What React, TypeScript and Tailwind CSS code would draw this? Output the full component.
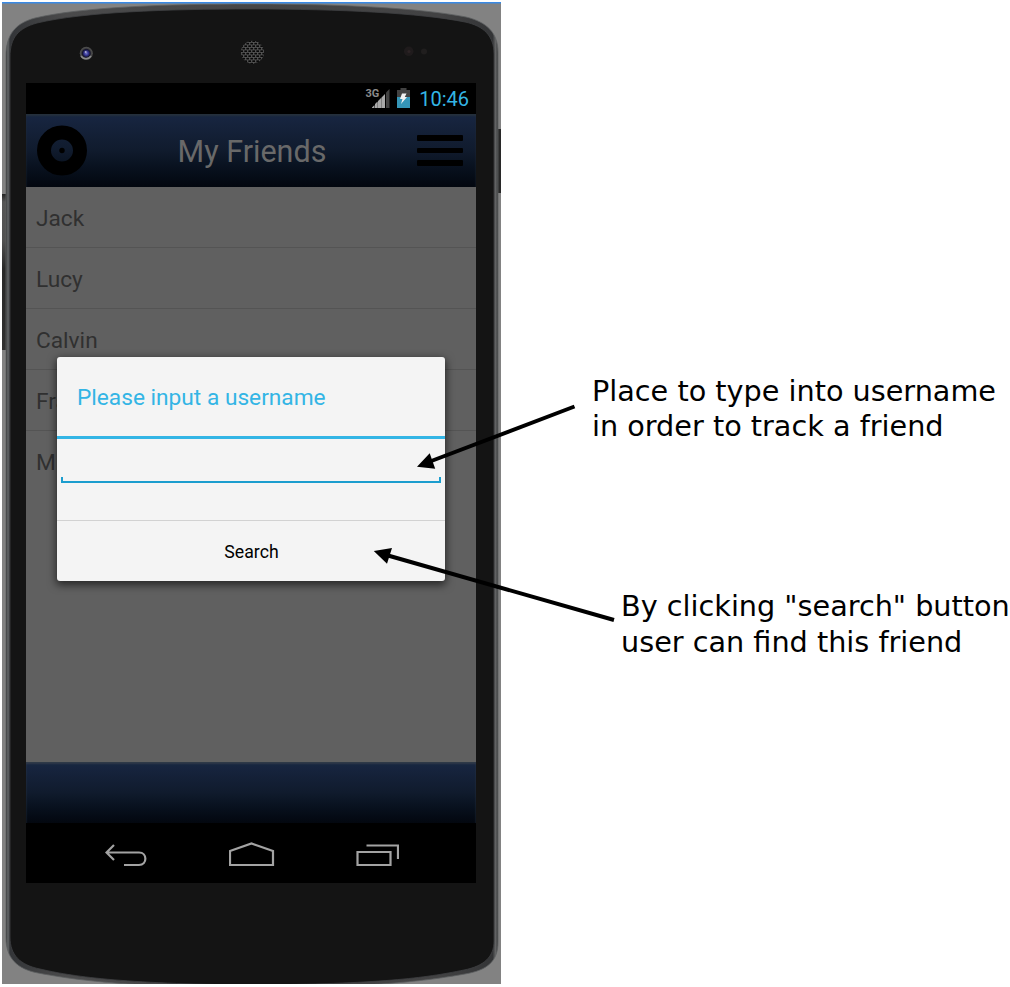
import React from "react";

const friends = ["Jack", "Lucy", "Calvin", "Frank", "Mike"];

const BODY =
  "M6 190V56C6 34 16 23 35 18C82 7 165 4 252 4C340 4 420 8 466 17C487 22 498 33 498 52V942C498 961 488 970 465 974C425 981 380 987 252 988C120 987 70 979 38 973C17 969 6 958 6 938Z";
const FACE =
  "M10 190V57C10 37 19 28 37 23C84 12 165 9 252 9C340 9 420 13 465 22C484 26 494 36 494 54V941C494 957 484 966 464 970C425 978 380 984 252 985C120 984 70 976 40 969C20 965 10 955 10 937Z";

function PhoneBody() {
  return (
    <svg className="absolute inset-0" width="501" height="984" viewBox="0 0 501 984">
      <defs>
        <linearGradient id="rim" x1="0" y1="0" x2="1" y2="0">
          <stop offset="0" stopColor="#303132" />
          <stop offset="0.004" stopColor="#66696b" />
          <stop offset="0.008" stopColor="#333538" />
          <stop offset="0.12" stopColor="#4a4a4b" />
          <stop offset="0.88" stopColor="#424243" />
          <stop offset="0.989" stopColor="#333436" />
          <stop offset="0.995" stopColor="#626364" />
          <stop offset="1" stopColor="#3a3b3c" />
        </linearGradient>
        <pattern id="mesh" width="4" height="5" patternUnits="userSpaceOnUse">
          <rect width="4" height="5" fill="#565656" />
          <rect x="0.3" y="0.3" width="2.8" height="1.7" fill="#080808" />
          <rect x="2.3" y="2.8" width="1.7" height="1.7" fill="#080808" />
          <rect x="0" y="2.8" width="1.1" height="1.7" fill="#080808" />
        </pattern>
        <radialGradient id="lens">
          <stop offset="0" stopColor="#7375c9" />
          <stop offset="0.35" stopColor="#30308c" />
          <stop offset="0.6" stopColor="#15152c" />
          <stop offset="0.78" stopColor="#444444" />
          <stop offset="1" stopColor="#525253" />
        </radialGradient>
        <linearGradient id="key" x1="0" y1="0" x2="0" y2="1">
          <stop offset="0" stopColor="#252525" />
          <stop offset="0.05" stopColor="#565656" />
          <stop offset="0.3" stopColor="#515151" />
          <stop offset="0.48" stopColor="#282828" />
          <stop offset="1" stopColor="#303030" />
        </linearGradient>
      </defs>
      <rect x="2" y="194" width="5" height="156" fill="url(#key)" />
      <rect x="498" y="129" width="3" height="64" fill="#282828" />
      <path d={BODY} fill="url(#rim)" />
      <path d={BODY} fill="none" stroke="#5d5f61" strokeWidth="0.8" />
      <path d={FACE} fill="#141414" stroke="#3f4042" strokeWidth="0.8" />
      <rect x="2" y="2" width="499" height="1.5" fill="#3989e4" />
      <circle cx="86.3" cy="53.3" r="6.5" fill="url(#lens)" />
      <path d="M81 56A6 6 0 0 0 91 56" fill="none" stroke="#8a8a8a" strokeWidth="1.4" />
      <circle cx="85.7" cy="52" r="1" fill="#aaaacf" />
      <circle cx="252.5" cy="52.2" r="11.5" fill="url(#mesh)" />
      <circle cx="408.7" cy="51.3" r="4.8" fill="#1f1b1c" />
      <circle cx="409" cy="51.5" r="1.6" fill="#2c2325" />
      <circle cx="424" cy="51.5" r="3" fill="#201e1e" />
    </svg>
  );
}

function StatusBar() {
  return (
    <div className="flex h-[31px] items-center justify-end bg-black pr-[7px]">
      <span className="mb-[11px] font-['Roboto'] text-[11px] leading-none font-bold text-[#8b8b8b]">3G</span>
      <svg className="mr-[7px] -ml-[8px]" width="19" height="20" viewBox="0 0 19 20">
        <path d="M15 3.500L18.500 0V19H15Z" fill="#424242" />
        <path d="M1 19V18.500L3 16.500V19ZM4 19V15L6.500 12.500V19ZM7 19V12L10 9V19ZM10.500 19V8.500L14 5V19Z" fill="#a8a8a8" />
        <path d="M1 19L14 5.500V19Z" fill="#a8a8a8" opacity=".5" />
      </svg>
      <svg className="mr-[9px] mb-[2px]" width="13" height="20" viewBox="0 0 13 20">
        <path d="M0 2H3.500V0H9.500V2H13V9H0Z" fill="#424242" />
        <path d="M0 9H13V20H0Z" fill="#3596b8" />
        <path d="M5 5.500H9.500L7.800 9H10L4 16L5.500 11H3Z" fill="#f2f2f2" />
      </svg>
      <span className="mt-[1px] font-['Roboto'] text-[20px] leading-none text-[#33b5e5]">10:46</span>
    </div>
  );
}

function TitleBar() {
  return (
    <header className="flex h-[73px] items-center justify-between bg-linear-to-b from-[#182642] via-[#101b2d] to-[#03070f] pr-[13px] pl-[11px] shadow-[inset_0_2px_2px_#25303c]">
      <svg width="50" height="51" viewBox="0 0 50 51">
        <circle cx="25" cy="25.500" r="18" fill="none" stroke="#000" strokeWidth="14" />
        <circle cx="25" cy="25.500" r="2.700" fill="#000" />
      </svg>
      <h1 className="mt-[3px] font-['Roboto'] text-[30.500px] leading-none text-[#696969]">My Friends</h1>
      <div className="flex w-[46px] flex-col gap-[7px]">
        <i className="h-[5.500px] rounded-[1px] bg-black" />
        <i className="h-[5.500px] rounded-[1px] bg-black" />
        <i className="h-[5.500px] rounded-[1px] bg-black" />
      </div>
    </header>
  );
}

function NavBar() {
  return (
    <nav className="flex h-[60px] items-center justify-between bg-black pt-[4px] pr-[77px] pl-[79px]">
      <svg width="42" height="24" viewBox="0 0 42 24" fill="none" stroke="#a3a3a3" strokeWidth="2.200">
        <path d="M9 2L1.500 9.500L9 17M2 9.500H34C42.500 9.500 42.500 22 34 22H19" />
      </svg>
      <svg className="-mt-[2px]" width="46" height="26" viewBox="0 0 46 26" fill="none" stroke="#a3a3a3" strokeWidth="2.200">
        <path d="M1 10L22.500 2.500L44 10V24H1Z" />
      </svg>
      <svg width="43" height="24" viewBox="0 0 43 24" fill="none" stroke="#a3a3a3" strokeWidth="2.200">
        <path d="M1.500 9H34.500V22H1.500ZM10.500 2.500H42V16" />
      </svg>
    </nav>
  );
}

function SearchDialog() {
  return (
    <section className="absolute top-[357px] left-[57px] flex h-[223.500px] w-[388px] flex-col rounded-[3px] bg-[#f4f4f4] font-['Roboto'] shadow-[0_3px_8px_1px_rgba(0,0,0,0.6)]">
      <h2 className="flex h-[82px] items-center border-b-[3px] border-[#33b5e5] pt-[3px] pl-[20px] text-[22.700px] leading-none text-[#33b5e5]">
        Please input a username
      </h2>
      <div className="flex h-[81px] flex-col px-[4px] pt-[38px]">
        <input aria-label="Username" className="h-[6px] border-x-2 border-b-2 border-[#1b9dce] bg-transparent outline-none" />
      </div>
      <button className="flex-1 border-t border-[#d2d2d2] pt-[4px] pl-[1px] text-[17.700px] leading-none text-black">Search</button>
    </section>
  );
}

function Arrows() {
  return (
    <svg className="absolute inset-0" width="1010" height="987" viewBox="0 0 1010 987">
      <path d="M574.500 406.500L430 461.500M614 620L388 555.500" stroke="#000" strokeWidth="4" />
      <path d="M417 466.800L429.700 453.300L435.200 468.700ZM373.800 551L392 548L387 563.800Z" />
    </svg>
  );
}

export default function App() {
  return (
    <main className="relative flex h-[987px] w-[1010px] overflow-hidden bg-white">
      <div className="relative h-[984px] w-[501px] shrink-0 overflow-hidden">
        <div className="h-full pt-[2px] pl-[2px]">
          <div className="h-full bg-[#828282]" />
        </div>
        <PhoneBody />
        <div className="absolute top-[83px] left-[26px] flex h-[800px] w-[450px] flex-col">
          <StatusBar />
          <TitleBar />
          <ul className="flex-1 bg-[#606060] font-['Roboto'] text-[22.700px] text-[#303030]">
            {friends.map((name, i) => (
              <li
                key={name}
                className={
                  i < 4
                    ? "flex h-[61px] items-center border-b border-[#545454] pt-[4px] pl-[10px]"
                    : "flex h-[61px] items-center pt-[3px] pl-[10px]"
                }
              >
                {name}
              </li>
            ))}
          </ul>
          <footer className="h-[61px] bg-linear-to-b from-[#182642] via-[#101b2d] to-[#03070f] shadow-[inset_0_2px_2px_#303a48]" />
          <NavBar />
        </div>
        <SearchDialog />
      </div>
      <aside className="flex flex-1 flex-col pt-[374px] font-['DejaVu_Sans'] text-[28.700px] leading-[35px] whitespace-nowrap text-black">
        <p className="pl-[91px]">
          Place to type into username
          <br />
          in order to track a friend
        </p>
        <p className="mt-[144px] pl-[120px] leading-[36px]">
          By clicking "search" button
          <br />
          user can find this friend
        </p>
      </aside>
      <Arrows />
    </main>
  );
}
